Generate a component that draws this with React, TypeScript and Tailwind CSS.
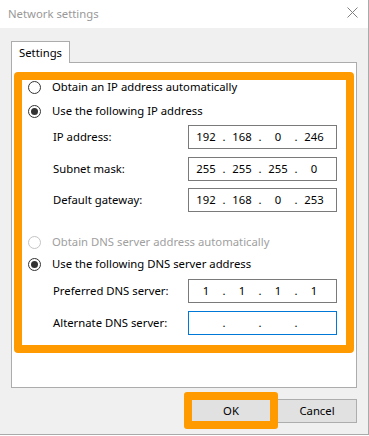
import React from "react";

function Radio({ checked, disabled, label }: { checked?: boolean; disabled?: boolean; label: string }) {
  return (
    <div className="flex items-center h-[14px] pl-[6px]">
      <span
        className={`w-[13px] h-[13px] rounded-full border flex items-center justify-center bg-white ${
          disabled ? "border-[#c4c4c4]" : "border-[#333333]"
        }`}
      >
        {checked && <span className="w-[7px] h-[7px] rounded-full bg-[#333333]" />}
      </span>
      <span className={`ml-[11px] ${disabled ? "text-[#a0a0a0]" : "text-black"}`}>{label}</span>
    </div>
  );
}

function IpBox({ values, focused }: { values: string[]; focused?: boolean }) {
  return (
    <div
      className={`w-[149px] h-[24px] border flex items-center pl-[2px] bg-white ${
        focused ? "border-[#0078d7]" : "border-[#7a7a7a]"
      }`}
    >
      {values.map((v, i) => (
        <React.Fragment key={i}>
          {i > 0 && <span className="w-[6px] text-center">.</span>}
          <span className="w-[30px] text-center">{v}</span>
        </React.Fragment>
      ))}
    </div>
  );
}

function Field({ label, values, focused, className }: { label: string; values: string[]; focused?: boolean; className?: string }) {
  return (
    <div className={`flex items-center h-[24px] ${className ?? ""}`}>
      <span className="w-[166px] pl-[31px] text-black">{label}</span>
      <IpBox values={values} focused={focused} />
    </div>
  );
}

export default function App() {
  return (
    <div className="w-[369px] h-[436px] bg-white font-['Noto_Sans','Liberation_Sans',sans-serif] text-[11.3px] leading-none">
      <div className="w-[369px] h-[435px] bg-[#f0f0f0] border-b border-r border-[#aaaaaa] flex flex-col">
        <div className="h-[28px] bg-white flex items-center justify-between pl-[8px] pr-[10px]">
          <span className="text-[#999999]">Network settings</span>
          <svg width="11" height="11" viewBox="0 0 11 11" className="mb-[4px]">
            <path d="M0.5 0.5 L10.5 10.5 M10.5 0.5 L0.5 10.5" stroke="#808080" strokeWidth="1" fill="none" />
          </svg>
        </div>
        <div className="pt-[13px] pl-[11px]">
          <div className="relative z-10 -mb-[1px] w-[59px] h-[22px] bg-white border-l border-t border-r border-[#acacac] flex items-center pl-[7px] text-black">
            Settings
          </div>
          <div className="w-[346px] h-[326px] bg-white border border-[#acacac] pt-[9px] pl-[2px]">
            <div className="w-[340px] h-[281px] border-[8px] border-[#ff9b00] rounded-[4px] flex flex-col">
              <Radio label="Obtain an IP address automatically" />
              <div className="mt-[10px]">
                <Radio checked label="Use the following IP address" />
              </div>
              <Field className="mt-[7px]" label="IP address:" values={["192", "168", "0", "246"]} />
              <Field className="mt-[8px]" label="Subnet mask:" values={["255", "255", "255", "0"]} />
              <Field className="mt-[7px]" label="Default gateway:" values={["192", "168", "0", "253"]} />
              <div className="mt-[23px]">
                <Radio disabled label="Obtain DNS server address automatically" />
              </div>
              <div className="mt-[8px]">
                <Radio checked label="Use the following DNS server address" />
              </div>
              <Field className="mt-[8px]" label="Preferred DNS server:" values={["1", "1", "1", "1"]} />
              <Field className="mt-[8px]" label="Alternate DNS server:" values={["", "", "", ""]} focused />
            </div>
          </div>
          <div className="w-[346px] mt-[4px] h-[37px] flex items-center justify-end">
            <div className="relative z-10 w-[94px] h-[37px] border-[8px] border-[#ff9b00] rounded-[3px] bg-[#e1e1e1] flex items-center justify-center text-black">
              OK
            </div>
            <div className="-ml-[1px] w-[80px] h-[24px] border border-[#adadad] bg-[#e1e1e1] flex items-center justify-center text-black">
              Cancel
            </div>
          </div>
        </div>
      </div>
    </div>
  );
}
